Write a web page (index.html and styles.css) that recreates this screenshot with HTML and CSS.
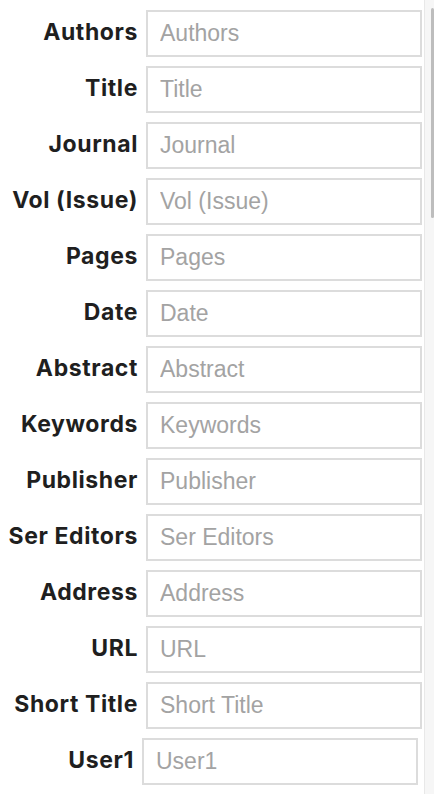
FILE: index.html
```html
<!DOCTYPE html>
<html lang="en">
<head>
    <meta charset="UTF-8">
    <meta name="viewport" content="width=device-width, initial-scale=1.0">
    <title>Reference Fields</title>
    <link rel="stylesheet" href="styles.css">
</head>
<body>
    <div class="page">
        <form class="fields">
            <div class="row"><label for="authors">Authors</label><input type="text" id="authors" placeholder="Authors"></div>
            <div class="row"><label for="title">Title</label><input type="text" id="title" placeholder="Title"></div>
            <div class="row"><label for="journal">Journal</label><input type="text" id="journal" placeholder="Journal"></div>
            <div class="row"><label for="vol">Vol (Issue)</label><input type="text" id="vol" placeholder="Vol (Issue)"></div>
            <div class="row"><label for="pages">Pages</label><input type="text" id="pages" placeholder="Pages"></div>
            <div class="row"><label for="date">Date</label><input type="text" id="date" placeholder="Date"></div>
            <div class="row"><label for="abstract">Abstract</label><input type="text" id="abstract" placeholder="Abstract"></div>
            <div class="row"><label for="keywords">Keywords</label><input type="text" id="keywords" placeholder="Keywords"></div>
            <div class="row"><label for="publisher">Publisher</label><input type="text" id="publisher" placeholder="Publisher"></div>
            <div class="row"><label for="sereditors">Ser Editors</label><input type="text" id="sereditors" placeholder="Ser Editors"></div>
            <div class="row"><label for="address">Address</label><input type="text" id="address" placeholder="Address"></div>
            <div class="row"><label for="url">URL</label><input type="text" id="url" placeholder="URL"></div>
            <div class="row"><label for="shorttitle">Short Title</label><input type="text" id="shorttitle" placeholder="Short Title"></div>
            <div class="row row-last"><label for="user1">User1</label><input type="text" id="user1" placeholder="User1"></div>
        </form>
        <div class="scrollbar"><div class="thumb"></div></div>
    </div>
</body>
</html>
```

FILE: styles.css
```css
body {
    margin: 0;
    padding: 0;
    background: #ffffff;
    font-family: "Liberation Sans", Arial, sans-serif;
    overflow: hidden;
}

.page {
    display: flex;
    height: 794px;
}

.fields {
    flex: 1;
    padding-top: 10px;
}

.row {
    display: grid;
    grid-template-columns: 137px 276px;
    column-gap: 9px;
    align-items: center;
    margin-bottom: 9px;
}

.row-last {
    margin-left: -4px;
}

label {
    text-align: right;
    font-family: Inter, "Liberation Sans", Arial, sans-serif;
    font-size: 23px;
    font-weight: bold;
    letter-spacing: 0.6px;
    color: #1f1f1f;
    white-space: nowrap;
    margin-right: -1px;
    padding-bottom: 4px;
}

input[type="text"] {
    box-sizing: border-box;
    height: 47px;
    width: 276px;
    margin: 0;
    padding: 0 12px;
    border: 2px solid #dcdcdc;
    border-radius: 0;
    font-family: "Liberation Sans", Arial, sans-serif;
    font-size: 23px;
    color: #333333;
    background: #ffffff;
    outline: none;
}

input::placeholder {
    color: #a3a3a3;
}

.scrollbar {
    width: 9px;
    border-left: 1px solid #e8e8e8;
    background: #f6f6f6;
    position: relative;
}

.thumb {
    position: absolute;
    top: 8px;
    right: 0;
    width: 3px;
    height: 210px;
    border-radius: 2px;
    background: #bdbdbd;
}
```
